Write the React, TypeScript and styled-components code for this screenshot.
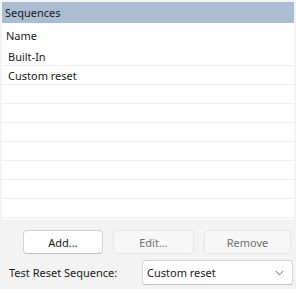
import { createGlobalStyle } from 'styled-components'
import styled from 'styled-components'

const GlobalStyle = createGlobalStyle`
  html, body {
    margin: 0;
    padding: 0;
    background: #f3f3f3;
  }
  body {
    font-family: 'Noto Sans', 'Open Sans', sans-serif;
    font-size: 11px;
    color: #1a1a1a;
  }
`

const ROW_COUNT = 9
const sequences = ['Built-In', 'Custom reset']

const Page = styled.div`
  width: 296px;
  height: 289px;
  box-sizing: border-box;
  padding: 2px 2px 0 2px;
  display: flex;
  flex-direction: column;
  background: #f3f3f3;
`

const Panel = styled.div`
  height: 217px;
  background: #ffffff;
  display: flex;
  flex-direction: column;
`

const Header = styled.div`
  height: 21px;
  flex-shrink: 0;
  background: #aabdd3;
  padding-left: 3px;
  display: flex;
  align-items: center;
  color: #1b1b1b;
`

const ColumnHeader = styled.div`
  height: 24px;
  flex-shrink: 0;
  padding-left: 4px;
  box-sizing: border-box;
  display: flex;
  align-items: center;
`

const Row = styled.div`
  height: 19px;
  flex-shrink: 0;
  box-sizing: border-box;
  border-bottom: 1px solid #efefef;
  padding-left: 6px;
  padding-top: 1px;
  display: flex;
  align-items: center;
`

const ButtonBar = styled.div`
  display: flex;
  margin-top: 11px;
  padding-left: 21px;
  gap: 10px;
`

const Button = styled.button<{ $width: number }>`
  width: ${({ $width }) => $width}px;
  height: 24px;
  box-sizing: border-box;
  border-radius: 4px;
  font-family: inherit;
  font-size: 11px;
  padding: 0;
  background: ${({ disabled }) => (disabled ? '#f7f7f7' : '#fdfdfd')};
  color: ${({ disabled }) => (disabled ? '#6f6f6f' : '#1a1a1a')};
  border: 1px solid ${({ disabled }) => (disabled ? '#e6e6e6' : '#d3d3d3')};
  border-bottom-color: ${({ disabled }) => (disabled ? '#e6e6e6' : '#bdbdbd')};
`

const SelectRow = styled.div`
  display: flex;
  align-items: center;
  margin-top: 6px;
  padding-left: 7px;
`

const Label = styled.div`
  width: 133px;
`

const Select = styled.div`
  width: 151px;
  height: 25px;
  box-sizing: border-box;
  background: #ffffff;
  border: 1px solid #d6d6d6;
  border-bottom-color: #c0c0c0;
  border-radius: 3px;
  display: flex;
  align-items: center;
  justify-content: space-between;
  padding: 0 8px 0 4px;
`

const Chevron = () => (
  <svg width="9" height="6" viewBox="0 0 9 6">
    <path d="M0.5 0.8 L4.5 4.8 L8.5 0.8" fill="none" stroke="#6a6a6a" strokeWidth="1" />
  </svg>
)

export default function App() {
  const rows = Array.from({ length: ROW_COUNT }, (_, i) => sequences[i] ?? '')
  return (
    <>
      <GlobalStyle />
      <Page>
        <Panel>
          <Header>Sequences</Header>
          <ColumnHeader>Name</ColumnHeader>
          {rows.map((name, i) => (
            <Row key={i}>{name}</Row>
          ))}
        </Panel>
        <ButtonBar>
          <Button $width={80}>Add...</Button>
          <Button $width={81} disabled>
            Edit...
          </Button>
          <Button $width={87} disabled>
            Remove
          </Button>
        </ButtonBar>
        <SelectRow>
          <Label>Test Reset Sequence:</Label>
          <Select>
            <span>Custom reset</span>
            <Chevron />
          </Select>
        </SelectRow>
      </Page>
    </>
  )
}
